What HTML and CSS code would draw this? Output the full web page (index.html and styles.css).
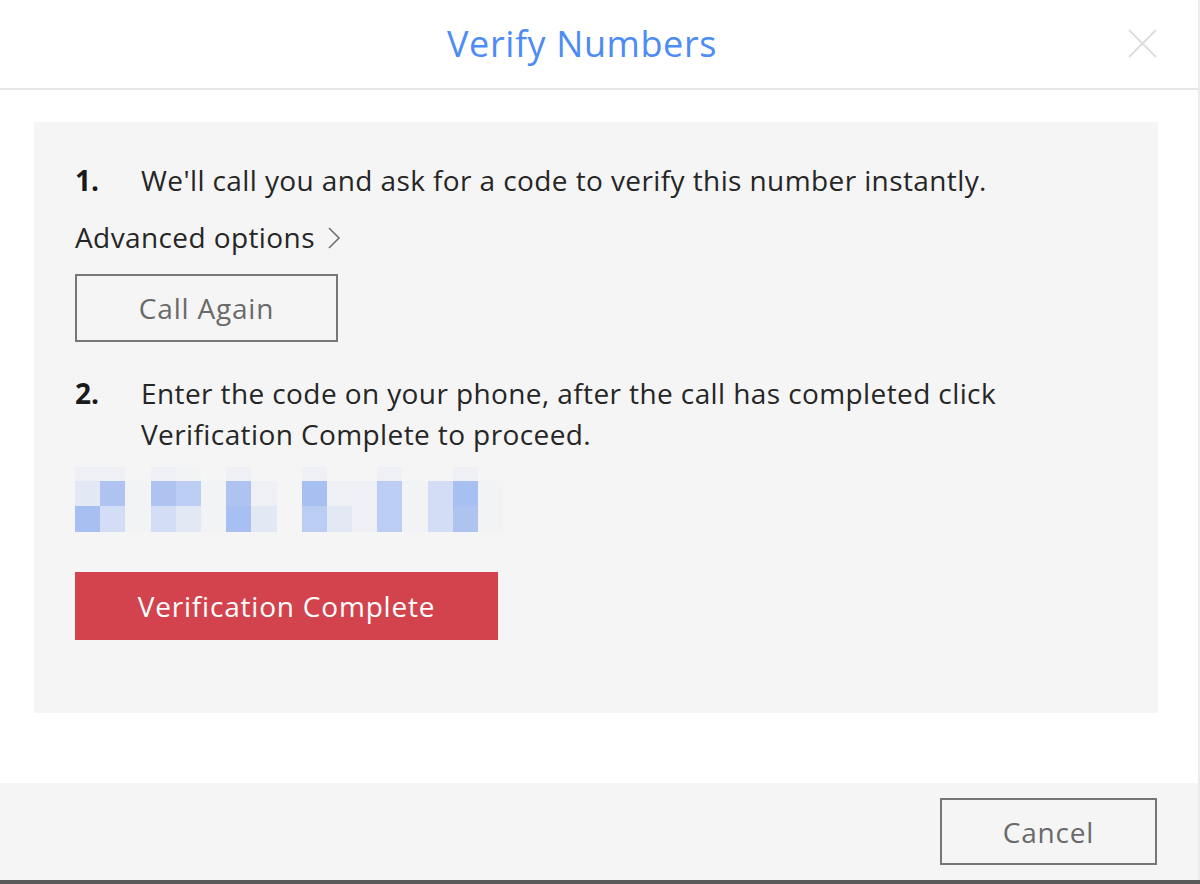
FILE: index.html
```html
<!DOCTYPE html>
<html lang="en">
<head>
<meta charset="utf-8">
<title>Verify Numbers</title>
<link rel="stylesheet" href="styles.css">
</head>
<body>
<div class="modal">
  <header class="header">
    <h1 class="title">Verify Numbers</h1>
    <button class="close" aria-label="Close">
      <svg width="29" height="29" viewBox="0 0 29 29"><path d="M1 1 L28 28 M28 1 L1 28" stroke="#dedede" stroke-width="2" fill="none"/></svg>
    </button>
  </header>
  <main class="body">
    <section class="panel">
      <div class="step">
        <span class="num">1.</span>
        <p class="step-text">We'll call you and ask for a code to verify this number instantly.</p>
      </div>
      <div class="advanced">Advanced options
        <svg class="chev" width="14" height="22" viewBox="0 0 14 22"><polyline points="2,1 12,11 2,21" stroke="#707070" stroke-width="1.6" fill="none"/></svg>
      </div>
      <button class="btn-outline call">Call Again</button>
      <div class="step step2">
        <span class="num">2.</span>
        <p class="step-text narrow">Enter the code on your phone, after the call has completed click Verification Complete to proceed.</p>
      </div>
      <div class="code">
        <i class="s1"></i><i class="s1"></i><i></i><i class="s1"></i><i class="s0"></i><i></i><i class="s1"></i><i></i><i></i><i class="s1"></i><i></i><i></i><i class="s1"></i><i></i><i></i><i class="s1"></i><i></i>
        <i class="s2"></i><i class="s5"></i><i class="s0"></i><i class="s5"></i><i class="s4"></i><i class="s0"></i><i class="s5"></i><i class="s1"></i><i></i><i class="s6"></i><i class="s1"></i><i class="s1"></i><i class="s4"></i><i class="s0"></i><i class="s3"></i><i class="s6"></i><i class="s0"></i>
        <i class="s6"></i><i class="s3"></i><i class="s0"></i><i class="s3"></i><i class="s2"></i><i class="s0"></i><i class="s6"></i><i class="s2"></i><i></i><i class="s4"></i><i class="s2"></i><i class="s1"></i><i class="s4"></i><i class="s0"></i><i class="s3"></i><i class="s5"></i><i class="s0"></i>
      </div>
      <button class="btn-primary">Verification Complete</button>
    </section>
  </main>
  <footer class="footer">
    <button class="btn-outline cancel">Cancel</button>
  </footer>
</div>
<div class="bottom-bar"></div>
</body>
</html>
```

FILE: styles.css
```css
* { box-sizing: border-box; }
html, body { margin: 0; padding: 0; }
body {
  width: 1200px;
  height: 884px;
  overflow: hidden;
  background: #fff;
  font-family: "Open Sans", "Noto Sans", sans-serif;
  color: #262626;
}
.modal {
  width: 1200px;
  height: 880px;
  border-right: 2px solid #ececec;
  display: flex;
  flex-direction: column;
  background: #fff;
}
.header {
  position: relative;
  height: 90px;
  flex: none;
  border-bottom: 2px solid #e6e6e6;
  display: flex;
  align-items: center;
  justify-content: center;
  padding-right: 34px;
}
.title {
  margin: 0 0 2px 0;
  font-weight: 400;
  font-size: 36px;
  letter-spacing: 0.6px;
  color: #4d8cf5;
}
.close {
  position: absolute;
  right: 41px;
  top: 29px;
  padding: 0;
  border: 0;
  background: none;
  width: 29px;
  height: 29px;
  display: block;
}
.close svg { display: block; }
.body {
  flex: none;
  padding: 32px 40px 70px 34px;
}
.panel {
  background: #f5f5f5;
  height: 591px;
  padding: 38px 41px 0 41px;
  display: flex;
  flex-direction: column;
  align-items: flex-start;
}
.step {
  display: flex;
  align-items: flex-start;
  font-size: 28px;
  line-height: 41px;
  letter-spacing: 0.4px;
}
.num {
  width: 66px;
  flex: none;
  font-weight: 700;
  letter-spacing: 0;
  color: #1a1a1a;
}
.step-text {
  margin: 0;
  color: #262626;
}
.narrow { max-width: 900px; }
.advanced {
  margin-top: 16px;
  font-size: 28px;
  line-height: 41px;
  letter-spacing: 0.4px;
  color: #262626;
  display: flex;
  align-items: center;
  gap: 12px;
}
.chev { display: block; margin-top: 1px; }
.btn-outline {
  font-family: inherit;
  font-size: 28px;
  letter-spacing: 0.8px;
  color: #6a6a6a;
  background: transparent;
  border: 2px solid #777;
  border-radius: 0;
  padding: 0;
  display: flex;
  align-items: center;
  justify-content: center;
}
.call {
  margin-top: 16px;
  width: 263px;
  height: 68px;
}
.step2 { margin-top: 31px; }
.code {
  margin-top: 12px;
  display: grid;
  grid-template-columns: repeat(17, 25.2px);
  grid-template-rows: 14px 25px 26px;
}
.code i { display: block; }
.s0 { background: #f2f3f5; }
.s1 { background: #eff0f5; }
.s2 { background: #e3e8f5; }
.s3 { background: #d3ddf5; }
.s4 { background: #bccdf3; }
.s5 { background: #afc3f0; }
.s6 { background: #a7bff1; }
.btn-primary {
  margin-top: 40px;
  width: 423px;
  height: 68px;
  border: 0;
  border-radius: 0;
  background: #d3434d;
  color: #fff;
  font-family: inherit;
  font-size: 28px;
  letter-spacing: 0.8px;
  padding: 0;
}
.footer {
  flex: 1;
  background: #f5f5f5;
  display: flex;
  justify-content: flex-end;
  align-items: flex-start;
  padding: 15px 41px 0 0;
}
.cancel {
  width: 217px;
  height: 67px;
}
.bottom-bar {
  height: 4px;
  background: #5a5a5a;
}
```
